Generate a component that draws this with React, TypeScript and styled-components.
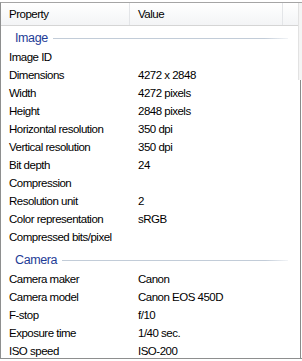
import styled, { createGlobalStyle } from 'styled-components';

interface Row {
  name: string;
  value?: string;
}

interface Group {
  title: string;
  rows: Row[];
}

const groups: Group[] = [
  {
    title: 'Image',
    rows: [
      { name: 'Image ID' },
      { name: 'Dimensions', value: '4272 x 2848' },
      { name: 'Width', value: '4272 pixels' },
      { name: 'Height', value: '2848 pixels' },
      { name: 'Horizontal resolution', value: '350 dpi' },
      { name: 'Vertical resolution', value: '350 dpi' },
      { name: 'Bit depth', value: '24' },
      { name: 'Compression' },
      { name: 'Resolution unit', value: '2' },
      { name: 'Color representation', value: 'sRGB' },
      { name: 'Compressed bits/pixel' },
    ],
  },
  {
    title: 'Camera',
    rows: [
      { name: 'Camera maker', value: 'Canon' },
      { name: 'Camera model', value: 'Canon EOS 450D' },
      { name: 'F-stop', value: 'f/10' },
      { name: 'Exposure time', value: '1/40 sec.' },
      { name: 'ISO speed', value: 'ISO-200' },
    ],
  },
];

const GlobalStyle = createGlobalStyle`
  html, body {
    margin: 0;
    padding: 0;
    background: #ffffff;
  }
  body {
    font-family: "Liberation Sans", Arial, sans-serif;
    font-size: 11.5px;
    color: #000;
  }
`;

export default function App() {
  return (
    <>
      <GlobalStyle />
      <Frame>
        <List>
          <Header>
            <HeaderCell $width={129}>Property</HeaderCell>
            <HeaderCell $width={153}>Value</HeaderCell>
            <HeaderFiller />
          </Header>
          {groups.map((group, i) => (
            <div key={group.title}>
              <GroupRow $first={i === 0}>
                <GroupTitle>{group.title}</GroupTitle>
                <GroupLine />
              </GroupRow>
              {group.rows.map((row) => (
                <ItemRow key={row.name}>
                  <NameCell>{row.name}</NameCell>
                  <ValueCell>{row.value}</ValueCell>
                </ItemRow>
              ))}
            </div>
          ))}
        </List>
        <ScrollEdge>
          <Thumb />
          <Track />
        </ScrollEdge>
      </Frame>
    </>
  );
}

const Frame = styled.div`
  margin-top: 2px;
  width: 301px;
  height: 355px;
  border-top: 1px solid #a5a5a5;
  border-left: 1px solid #8e8f8f;
  border-bottom: 1px solid #8e8f8f;
  display: flex;
  overflow: hidden;
`;

const List = styled.div`
  flex: 1;
  min-width: 0;
`;

const Header = styled.div`
  display: flex;
  height: 22px;
  border-bottom: 1px solid #d5d5d5;
  background: linear-gradient(#ffffff, #f3f4f6);
`;

const HeaderCell = styled.div<{ $width: number }>`
  width: ${(p) => p.$width}px;
  padding-left: 8px;
  box-sizing: border-box;
  display: flex;
  align-items: center;
  border-right: 1px solid #e3e5e8;
  letter-spacing: -0.5px;
`;

const HeaderFiller = styled.div`
  flex: 1;
`;

const GroupRow = styled.div<{ $first: boolean }>`
  display: flex;
  align-items: center;
  height: 22px;
  margin-top: ${(p) => (p.$first ? 0 : 2)}px;
  padding: 1px 10px 0 14px;
  box-sizing: border-box;
`;

const GroupTitle = styled.span`
  color: #1e3c96;
  font-size: 12.5px;
  letter-spacing: -0.4px;
`;

const GroupLine = styled.div`
  flex: 1;
  height: 1px;
  margin-left: 5px;
  margin-top: 1px;
  background: linear-gradient(to right, #c2ccd8 90%, #f2f4f7);
`;

const ItemRow = styled.div`
  display: flex;
  align-items: center;
  height: 18px;
  letter-spacing: -0.5px;
`;

const NameCell = styled.div`
  width: 137px;
  padding-left: 8px;
  box-sizing: border-box;
  white-space: nowrap;
`;

const ValueCell = styled.div`
  white-space: nowrap;
`;

const ScrollEdge = styled.div`
  width: 4px;
  display: flex;
  flex-direction: column;
`;

const Thumb = styled.div`
  height: 77px;
  background: #f4f4f4;
  border-left: 1px solid #e2e2e2;
`;

const Track = styled.div`
  flex: 1;
  margin-left: 2px;
  border-left: 1px solid #8a8a8a;
`;
